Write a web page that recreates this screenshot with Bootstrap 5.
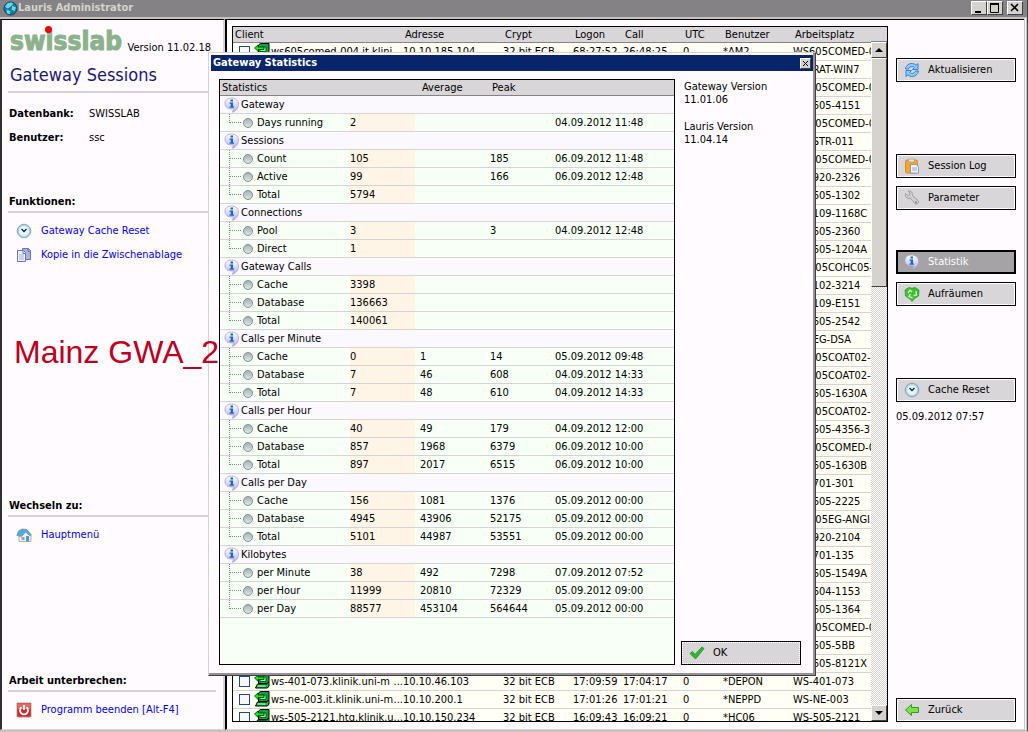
<!DOCTYPE html>
<html lang="de">
<head>
<meta charset="utf-8">
<meta name="viewport" content="width=device-width, initial-scale=1">
<title>Lauris Administrator</title>
<link href="https://cdn.jsdelivr.net/npm/bootstrap@5.3.0/dist/css/bootstrap.min.css" rel="stylesheet">
<style>
:root { --paper:#fffbff; --line:#d6d3d6; --face:#d9d6d9; }
body { font:11px/14px "DejaVu Sans Condensed","DejaVu Sans",sans-serif; color:#000; background:var(--paper); }
a { color:#0000ff; text-decoration:none; }
svg { display:block; flex:none; }
.app { height:100vh; border-right:1px solid #424142; border-bottom:2px solid #c6c3bd; }
.titlebar { height:17px; background:#848284; color:#d6d3ce; font-weight:bold; padding-left:3px; }
.winbtn { width:16px; height:14px; padding:0; background:#d6d3ce; border:1px solid; border-color:#fff #424142 #424142 #fff; border-radius:0; display:grid; place-items:center; }
.panes { border-right:3px double #c6c3c6; border-top:2px solid #c6c3bd; }
.side { width:225px; border-left:2px solid #313031; border-top:1px solid #000; border-right:2px solid var(--line); border-bottom:1px solid var(--line); padding:5px 0 7px 6px; }
.work { border-left:2px solid #000; border-top:1px solid #000; border-bottom:1px solid var(--line); padding:6px 8px 7px 5px; }
.brand { font:bold 26px/32px "DejaVu Sans Condensed","DejaVu Sans",sans-serif; color:#8cb28c; -webkit-text-stroke:1px #8cb28c; height:34px; padding-left:2px; }
.brand-dot { width:7px; height:7px; left:37px; top:1px; background:#ee0000; border-radius:50%; }
h1 { font-size:18px; line-height:24px; color:#181873; margin:0; padding-left:2px; }
h2 { font-size:11px; line-height:16px; font-weight:bold; margin:0 0 6px; padding:0 0 1px 1px; border-bottom:2px solid var(--line); }
.ruled { border-bottom:2px solid var(--line); }
.side-block { width:208px; }
.facts { grid-template-columns:80px 1fr; row-gap:10px; padding-left:1px; margin:14px 0 0; }
.side-link { display:flex; gap:9px; align-items:center; height:24px; padding-left:8px; }
.fn-block { height:353px; padding-top:49px; }
.instance { font:32px/36px "Liberation Sans",Arial,sans-serif; color:#bd0021; margin:67px 0 0 6px; width:205px; z-index:5; }
.listbox { flex:1 1 0; border:1px solid #000; background:#fffff5; min-width:0; }
table { table-layout:fixed; width:100%; border-collapse:separate; border-spacing:0; }
th { font-weight:normal; padding:0 0 0 2px; height:16px; line-height:15px; background:var(--face); border-bottom:1px solid #848284; white-space:nowrap; }
td { height:18px; padding:0; line-height:17px; border-bottom:1px solid var(--line); white-space:nowrap; overflow:hidden; }
.clients td { text-overflow:clip; }
.tick { appearance:none; width:11px; height:11px; border:1px solid #21497b; background:#f7f7f7; margin:0 4px 0 6px; flex:none; }
.client-name { padding-left:1px; }
.scroll { width:16px; background:repeating-conic-gradient(#d6d3ce 0 25%,#fff 0 50%) 0 0/2px 2px; }
.scroll-head { height:15px; background:var(--face); border-bottom:1px solid #848284; flex:none; }
.scroll button { width:16px; height:16px; flex:none; }
.thumb { height:229px; background:#d6d3ce; border:1px solid; border-color:#fff #424142 #424142 #fff; }
.actions { width:120px; margin:32px 0 0 8px; }
.cmd { height:24px; width:120px; padding:0 0 0 7px; display:flex; align-items:center; gap:8px; border:1px solid #000; border-radius:0; background:var(--face); box-shadow:inset 0 0 0 1px #fff; font-size:11px; line-height:14px; color:#000; text-align:left; }
.cmd.active { background:#a5a3a5; color:#fff; border-color:#000; box-shadow:inset 0 0 0 1px #000; }
.cmd.ok { box-shadow:none; outline:1px dotted #fff; outline-offset:-2px; }
.gap-a { margin-top:72px; }
.gap-b { margin-top:40px; }
.dialog { left:208px; top:52px; width:608px; height:624px; background:var(--paper); border:1px solid; border-color:#d6d3ce #424142 #424142 #d6d3ce; box-shadow:inset -2px -2px #949294; padding:2px; z-index:3; }
.caption-bar { height:16px; background:#08246b; color:#fff; font-weight:bold; padding-left:2px; }
.caption-bar .winbtn { width:11px; height:11px; margin-right:2px; }
.stats { width:456px; margin:8px 0 8px 8px; border:1px solid #000; background:#f7fff7; }
.stats .group td { background:#fcf9fe; }
.stats .now { background:#fff5e6; }
.stats th.num { padding-left:7px; }
.stats td.num { padding-left:5px; }
.group td div { padding-left:4px; gap:1px; }
.branch { width:12px; height:17px; margin-left:9px; border-left:1px dotted #848284; background:linear-gradient(90deg,#848284 50%,transparent 0) 0 8px/2px 1px repeat-x; flex:none; }
.branch.end { height:9px; margin-bottom:8px; }
.ball { width:10px; height:10px; border-radius:50%; margin:0 4px 0 2px; background:linear-gradient(#a5b2b5,#dce6e6); border:1px solid #848e94; flex:none; }
.info { margin:9px 0 8px 6px; }
.info p { margin:0 0 14px 3px; line-height:13px; }
</style>
</head>
<body>
<svg width="0" height="0" class="position-absolute" aria-hidden="true">
<defs>
<linearGradient id="gb" x2="0" y2="1"><stop stop-color="#fff"/><stop offset="1" stop-color="#b5b2e7"/></linearGradient>
<symbol id="i-info" viewBox="0 0 16 16"><path d="M7.500 1C3.600 1 1 3.200 1 6.500c0 3.300 2.600 5.500 6.500 5.500.8 0 1.500 0 2 .2L8.500 15.200c3.500-1 6-4 6-8.200C14.500 3.500 11.500 1 7.500 1z" fill="url(#gb)" stroke="#a5a2d0" stroke-width=".8"/><path d="M6.500 2.500h2.500v2h-2.500zM5.500 5.500h3.500v4h1v1.200h-4.500v-1.200h1.200v-2.800h-1.200z" fill="#1069d0"/></symbol>
<symbol id="i-clock" viewBox="0 0 16 16"><circle cx="8" cy="8" r="6.800" fill="#a8d4ea" stroke="#7d96a5" stroke-width=".8"/><circle cx="8" cy="8" r="4.900" fill="#e6f8ff"/><path d="M5.500 6l2.500 2.500L10.500 6" fill="none" stroke="#182838" stroke-width="1.400"/></symbol>
<symbol id="i-copy" viewBox="0 0 16 16"><path d="M6.500 1.500h6l2 2v9h-8z" fill="#a9b2e2" stroke="#6b75b0"/><path d="M1.500 3.500h6l2 2v9h-8z" fill="#edf2ff" stroke="#6b75b0"/><path d="M3 8h5M3 10h5M3 12h5" stroke="#a5b0dc"/><path d="M7 3.500v3h2.500M12 1.500v3h2.500" stroke="#6b75b0" fill="none"/></symbol>
<symbol id="i-house" viewBox="0 0 16 16"><path d="M3 8l6-4 6 4v6.500H3z" fill="#f0f0ee" stroke="#9ca3a5" stroke-width=".8"/><path d="M.8 8.500L2.500 4 6 2l5 .5 4.300 5.500-1.500.5L9.500 5 5.500 9.500z" fill="#5aa9dd" stroke="#4a90c0" stroke-width=".7"/><path d="M10 9h3v5.500h-3z" fill="#4a9bdc"/><path d="M5.500 10h3v3h-3z" fill="#a5a29c"/></symbol>
<symbol id="i-power" viewBox="0 0 16 16"><path d="M1 1h14v14H1z" fill="#cf2b27" stroke="#a08c8c" stroke-width=".8"/><path d="M1.500 1.500h13V7h-13z" fill="#e06a62"/><path d="M5.500 5.200a4 4 0 1 0 5 0M8 3v5" fill="none" stroke="#fff" stroke-width="1.800"/></symbol>
<symbol id="i-refresh" viewBox="0 0 16 16"><path d="M1.500 7C2 3.500 5 1.200 8.500 1.500c1.500.1 2.700.8 3.500 1.700L14 1.500V7.500H8.500l2-2C8.500 3.800 5.500 4.500 4.500 7z" fill="#8ccbf7" stroke="#2879d4" stroke-width=".9"/><path d="M14.500 9c-.5 3.500-3.500 5.800-7 5.500-1.500-.1-2.700-.8-3.500-1.700L2 14.500V8.500h5.500l-2 2c2 1.700 5 1 6-1.500z" fill="#8ccbf7" stroke="#2879d4" stroke-width=".9"/></symbol>
<symbol id="i-clip" viewBox="0 0 16 16"><rect x="1.500" y="2" width="12" height="13" rx="1.500" fill="#f5a52a" stroke="#dc8c28"/><path d="M4.500 1h6v3h-6z" fill="#e8e3dc" stroke="#a5998c" stroke-width=".8"/><path d="M6.500 6.500h5.500l2.500 2.500v6h-8z" fill="#f0f3ff" stroke="#8488a5" stroke-width=".8"/><path d="M8 10h5M8 12h5" stroke="#b5bce0" stroke-width="1.400"/></symbol>
<symbol id="i-wrench" viewBox="0 0 16 16"><path d="M1.500 3.500l2 2 2-.5.500-2-2-2c3-.5 5 1.500 4.500 4.500l5.500 5c1.500 2-1 4.500-3 3l-5-5.500C3 9 .8 7 1.500 3.500z" fill="#cecfce" stroke="#9c9e9c"/><circle cx="12" cy="12.200" r="1" fill="#888"/></symbol>
<symbol id="i-recycle" viewBox="0 0 16 16"><path d="M1 4l4-2.500 3 .8 3-.8 4 2.500-.5 6L10 13l-2 2.500L6 13l-4.500-3z" fill="#43bd35" stroke="#2c9c2a" stroke-width=".8"/><path d="M4 7l2-3 2 2M12 5l.5 4-3 .5M8.500 12L5 10.500 6.500 8" fill="none" stroke="#c5ffba" stroke-width="1.400"/></symbol>
<symbol id="i-back" viewBox="0 0 16 16"><path d="M1.500 8L7.500 2.500v3h7v5h-7v3z" fill="#7be04a" stroke="#349a23"/></symbol>
<symbol id="i-check" viewBox="0 0 16 16"><path d="M1 8.500l2.500-2L6 9.500 13 2l2 1.500L6.500 14z" fill="#35b82b" stroke="#188c18" stroke-width=".8"/></symbol>
<symbol id="i-pc" viewBox="0 0 16 16"><path d="M4.500 2l2-1.500h8.500v8l-2 2h-8.500z" fill="#00a838" stroke="#000"/><path d="M6 4h6v4.500H6z" fill="#9cf0a0" stroke="#004818" stroke-width=".8"/><path d="M.5 5L4 2v2h6v2.500H4v1.800z" fill="#00f020" stroke="#003800" stroke-width=".8"/><path d="M3.500 11h9l2.500-2v4l-1.500 2h-12z" fill="#18b848" stroke="#000"/><path d="M3.500 13h8" stroke="#c6ffc6"/></symbol>
<symbol id="i-globe" viewBox="0 0 16 16"><circle cx="8" cy="8" r="7" fill="#187898" stroke="#083850" stroke-width=".8"/><path d="M2 6l3-4 4-.5L11 3 8 6l-3 2zM10 5l4 2-2 4-3-2zM4 9l4 2-1 3-3-1z" fill="#63d8e8"/></symbol>
</defs>
</svg>

<div class="app d-flex flex-column overflow-hidden">
  <header class="titlebar d-flex align-items-center">
    <svg width="15" height="15" aria-hidden="true"><use href="#i-globe"/></svg>
    <span class="me-auto">Lauris Administrator</span>
    <button class="winbtn" aria-label="Minimieren"><svg width="10" height="10"><path d="M1 8h6v2H1z"/></svg></button>
    <button class="winbtn" aria-label="Maximieren"><svg width="10" height="10"><path d="M.5 1.500h8v8h-8z" fill="none" stroke="#000"/><path d="M0 0h9v2H0z"/></svg></button>
    <button class="winbtn ms-1 me-1" aria-label="Schließen"><svg width="10" height="10"><path d="M1 1l7 7M8 1L1 8" stroke="#000" stroke-width="1.600"/></svg></button>
  </header>

  <div class="panes d-flex flex-fill overflow-hidden">
    <aside class="side d-flex flex-column flex-shrink-0">
      <div class="d-flex position-relative">
        <div class="brand">swisslab</div><span class="brand-dot position-absolute"></span>
        <span class="ms-auto me-2 pe-1 mt-3 text-nowrap">Version 11.02.18</span>
      </div>
      <div class="side-block ruled pt-1 pb-1"><h1>Gateway Sessions</h1></div>
      <dl class="facts d-grid">
        <dt>Datenbank:</dt><dd class="m-0">SWISSLAB</dd>
        <dt>Benutzer:</dt><dd class="m-0">ssc</dd>
      </dl>
      <section class="fn-block side-block flex-shrink-0">
        <h2>Funktionen:</h2>
        <nav>
          <a href="#" class="side-link"><svg width="16" height="16"><use href="#i-clock"/></svg>Gateway Cache Reset</a>
          <a href="#" class="side-link"><svg width="16" height="16"><use href="#i-copy"/></svg>Kopie in die Zwischenablage</a>
        </nav>
        <div class="instance position-relative overflow-hidden text-nowrap">Mainz GWA_2</div>
      </section>
      <section class="side-block">
        <h2>Wechseln zu:</h2>
        <a href="#" class="side-link"><svg width="16" height="16"><use href="#i-house"/></svg>Hauptmenü</a>
      </section>
      <section class="side-block mt-auto">
        <h2>Arbeit unterbrechen:</h2>
        <a href="#" class="side-link"><svg width="16" height="16"><use href="#i-power"/></svg>Programm beenden [Alt-F4]</a>
      </section>
    </aside>

    <main class="work d-flex flex-fill overflow-hidden">
      <div class="listbox d-flex overflow-hidden">
        <table class="clients align-self-start">
          <colgroup><col style="width:170px"><col style="width:100px"><col style="width:70px"><col style="width:50px"><col style="width:60px"><col style="width:40px"><col style="width:70px"><col></colgroup>
          <thead><tr><th>Client</th><th>Adresse</th><th>Crypt</th><th>Logon</th><th>Call</th><th>UTC</th><th>Benutzer</th><th>Arbeitsplatz</th></tr></thead>
          <tbody id="clients"></tbody>
        </table>
        <div class="scroll d-flex flex-column flex-shrink-0">
          <div class="scroll-head"></div>
          <button class="winbtn" aria-label="Nach oben"><svg width="8" height="8"><path d="M4 2l4 4H0z"/></svg></button>
          <div class="thumb"></div>
          <button class="winbtn mt-auto" aria-label="Nach unten"><svg width="8" height="8"><path d="M4 6L0 2h8z"/></svg></button>
        </div>
      </div>
      <div class="actions d-flex flex-column flex-shrink-0">
        <button class="cmd"><svg width="16" height="16"><use href="#i-refresh"/></svg>Aktualisieren</button>
        <button class="cmd gap-a"><svg width="16" height="16"><use href="#i-clip"/></svg>Session Log</button>
        <button class="cmd mt-2"><svg width="16" height="16"><use href="#i-wrench"/></svg>Parameter</button>
        <button class="cmd active gap-b"><svg width="16" height="16"><use href="#i-info"/></svg>Statistik</button>
        <button class="cmd mt-2"><svg width="16" height="16"><use href="#i-recycle"/></svg>Aufräumen</button>
        <button class="cmd gap-a"><svg width="16" height="16"><use href="#i-clock"/></svg>Cache Reset</button>
        <span class="mt-2">05.09.2012 07:57</span>
        <button class="cmd mt-auto"><svg width="16" height="16"><use href="#i-back"/></svg>Zurück</button>
      </div>
    </main>
  </div>
</div>

<div class="dialog position-absolute d-flex flex-column" role="dialog" aria-label="Gateway Statistics">
  <div class="caption-bar d-flex align-items-center"><span class="me-auto">Gateway Statistics</span>
    <button class="winbtn" aria-label="Schließen"><svg width="7" height="7"><path d="M1 1l5 5M6 1L1 6" stroke="#000"/></svg></button></div>
  <div class="d-flex flex-fill">
    <div class="stats">
      <table>
        <colgroup><col style="width:130px"><col style="width:65px"><col style="width:70px"><col style="width:70px"><col></colgroup>
        <thead><tr><th>Statistics</th><th></th><th class="num">Average</th><th class="num">Peak</th><th></th></tr></thead>
        <tbody id="stats"></tbody>
      </table>
    </div>
    <div class="info d-flex flex-column">
      <p>Gateway Version<br>11.01.06</p>
      <p>Lauris Version<br>11.04.14</p>
      <button class="cmd ok mt-auto"><svg width="16" height="16"><use href="#i-check"/></svg>OK</button>
    </div>
  </div>
</div>
<script>
const clients = [
 ["ws605comed-004.it.klini","10.10.185.104","32 bit ECB","68:27:52","26:48:25","0","*AM2","WS605COMED-004"],
 ..."WS-RAT-WIN7,WS605COMED-0,WS-605-4151,WS605COMED-0,WS-STR-011,WS605COMED-0,WS-920-2326,WS-605-1302,WS-109-1168C,WS-605-2360,WS-605-1204A,WS605COHC05-,WS-102-3214,WS-109-E151,WS-605-2542,WS-EG-DSA,WS605COAT02-,WS605COAT02-,WS-605-1630A,WS605COAT02-,WS-605-4356-3,WS605COMED-0,WS-605-1630B,WS-701-301,WS-605-2225,WS605EG-ANGI,WS-920-2104,WS-701-135,WS-605-1549A,WS-604-1153,WS-605-1364,WS605COMED-0,WS-605-5BB,WS-605-8121X".split(",").map(w => ["","","","","","","",w]),
 ["ws-401-073.klinik.uni-m","10.10.46.103","32 bit ECB","17:09:59","17:04:17","0","*DEPON","WS-401-073"],
 ["ws-ne-003.it.klinik.uni-m","10.10.200.1","32 bit ECB","17:01:26","17:01:21","0","*NEPPD","WS-NE-003"],
 ["ws-505-2121.htg.klinik.u","10.10.150.234","32 bit ECB","16:09:43","16:09:21","0","*HC06","WS-505-2121"]
];
document.getElementById("clients").innerHTML = clients.map(([name, ...rest], i) => "<tr><td>" +
 (name ? `<div class="d-flex align-items-center"><input type="checkbox" class="tick" aria-label="${name}"><svg width="16" height="16"><use href="#i-pc"/></svg><span class="client-name">${name}</span>${i ? '<span class="ms-auto">...</span>' : ''}</div>` : "") +
 "</td>" + rest.map(c => `<td>${c}</td>`).join("") + "</tr>").join("");

const stats = {
 "Gateway":[["Days running","2","","","04.09.2012 11:48"]],
 "Sessions":[["Count","105","","185","06.09.2012 11:48"],["Active","99","","166","06.09.2012 12:48"],["Total","5794","","",""]],
 "Connections":[["Pool","3","","3","04.09.2012 12:48"],["Direct","1","","",""]],
 "Gateway Calls":[["Cache","3398","","",""],["Database","136663","","",""],["Total","140061","","",""]],
 "Calls per Minute":[["Cache","0","1","14","05.09.2012 09:48"],["Database","7","46","608","04.09.2012 14:33"],["Total","7","48","610","04.09.2012 14:33"]],
 "Calls per Hour":[["Cache","40","49","179","04.09.2012 12:00"],["Database","857","1968","6379","06.09.2012 10:00"],["Total","897","2017","6515","06.09.2012 10:00"]],
 "Calls per Day":[["Cache","156","1081","1376","05.09.2012 00:00"],["Database","4945","43906","52175","05.09.2012 00:00"],["Total","5101","44987","53551","05.09.2012 00:00"]],
 "Kilobytes":[["per Minute","38","492","7298","07.09.2012 07:52"],["per Hour","11999","20810","72329","05.09.2012 09:00"],["per Day","88577","453104","564644","05.09.2012 00:00"]]
};
document.getElementById("stats").innerHTML = Object.entries(stats).map(([g, rows]) =>
 `<tr class="group"><td colspan="5"><div class="d-flex align-items-center"><svg width="16" height="16"><use href="#i-info"/></svg>${g}</div></td></tr>` +
 rows.map((r, i) => `<tr><td><div class="d-flex align-items-center"><span class="branch${i === rows.length - 1 ? " end" : ""}"></span><span class="ball"></span>${r[0]}</div></td><td class="now">${r[1]}</td><td class="num">${r[2]}</td><td class="num">${r[3]}</td><td>${r[4]}</td></tr>`).join("")).join("");
</script>
<script src="https://cdn.jsdelivr.net/npm/bootstrap@5.3.0/dist/js/bootstrap.bundle.min.js"></script>
</body>
</html>
